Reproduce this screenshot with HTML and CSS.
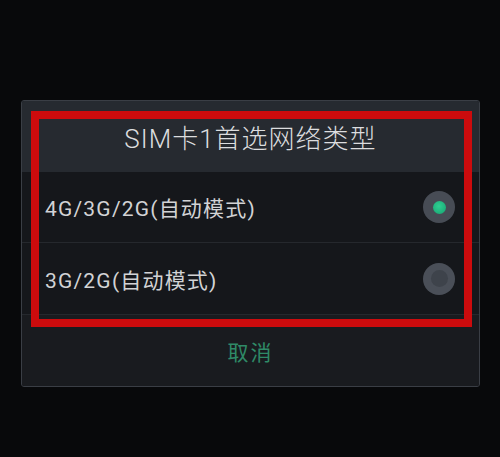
FILE: index.html
```html
<!DOCTYPE html>
<html lang="zh">
<head>
<meta charset="utf-8">
<link rel="stylesheet" href="styles.css">
</head>
<body>
<div class="screen">
  <div class="dialog">
    <div class="title">SIM卡1首选网络类型</div>
    <div class="row">
      <span class="label">4G/3G/2G(自动模式)</span>
      <span class="radio checked"><span class="dot"></span></span>
    </div>
    <div class="row">
      <span class="label">3G/2G(自动模式)</span>
      <span class="radio"><span class="dot"></span></span>
    </div>
    <div class="cancel">取消</div>
    <div class="highlight"></div>
  </div>
</div>
</body>
</html>
```

FILE: styles.css
```css
html, body {
  margin: 0;
  padding: 0;
  background: #08090b;
}
.screen {
  width: 500px;
  height: 457px;
  padding-top: 100px;
  padding-left: 21px;
  box-sizing: border-box;
  font-family: "Roboto", "Noto Sans CJK SC", sans-serif;
}
.dialog {
  position: relative;
  width: 459px;
  height: 287px;
  box-sizing: border-box;
  border: 1px solid #3a3e45;
  border-radius: 3px;
  background: #17191d;
  display: flex;
  flex-direction: column;
  overflow: hidden;
}
.title {
  height: 71px;
  flex: none;
  background: #262a30;
  color: #dcdddf;
  font-size: 26px;
  font-weight: 300;
  display: flex;
  align-items: center;
  justify-content: center;
  letter-spacing: 1px;
}
.row {
  height: 71px;
  flex: none;
  display: flex;
  align-items: center;
  justify-content: space-between;
  padding: 0 24px 0 23px;
  border-bottom: 1px solid #25282d;
  box-sizing: border-box;
  background: #15171b;
}
.row + .row {
  height: 72px;
}
.label {
  color: #d2d3d5;
  font-size: 21px;
  letter-spacing: 1.2px;
}
.radio {
  width: 32px;
  height: 32px;
  border-radius: 50%;
  background: #4a4f58;
  display: flex;
  align-items: center;
  justify-content: center;
}
.radio .dot {
  width: 17px;
  height: 17px;
  border-radius: 50%;
  background: #3e434b;
}
.radio.checked {
  background: #474c55;
}
.radio.checked .dot {
  width: 13px;
  height: 13px;
  background: radial-gradient(circle at 45% 40%, #2fcf92, #16a270);
}
.cancel {
  flex: 1;
  display: flex;
  align-items: center;
  justify-content: center;
  color: #2f8a67;
  font-size: 21px;
  letter-spacing: 2px;
  background: #191b1f;
}
.highlight {
  position: absolute;
  left: 9px;
  top: 10px;
  width: 441px;
  height: 216px;
  box-sizing: border-box;
  border: 8px solid #cc0b0d;
  pointer-events: none;
}
```
